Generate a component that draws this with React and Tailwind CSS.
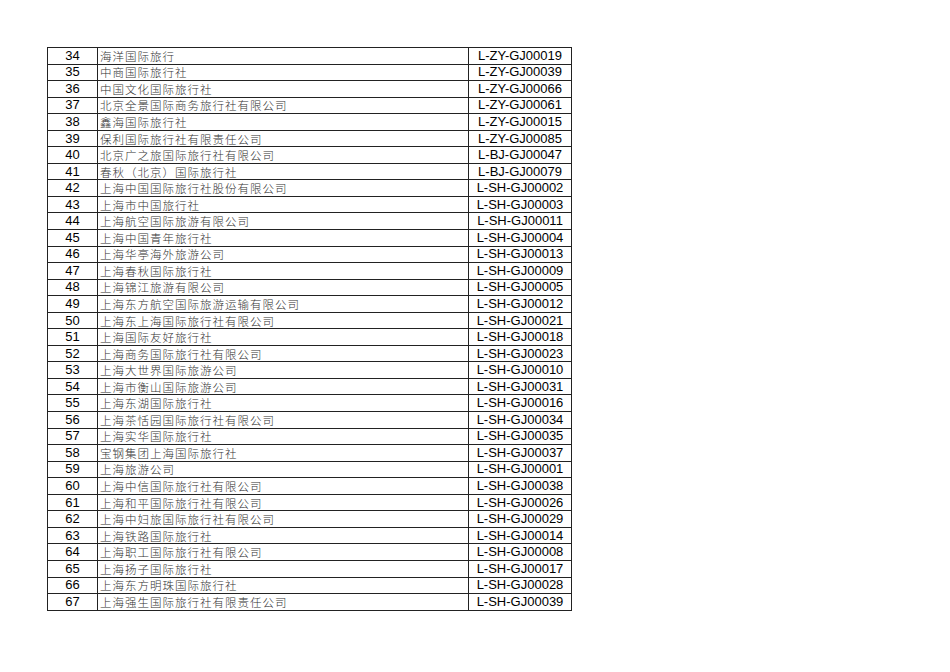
import React from "react";

const rows = [
  [34, "海洋国际旅行", "L-ZY-GJ00019"],
  [35, "中商国际旅行社", "L-ZY-GJ00039"],
  [36, "中国文化国际旅行社", "L-ZY-GJ00066"],
  [37, "北京全景国际商务旅行社有限公司", "L-ZY-GJ00061"],
  [38, "鑫海国际旅行社", "L-ZY-GJ00015"],
  [39, "保利国际旅行社有限责任公司", "L-ZY-GJ00085"],
  [40, "北京广之旅国际旅行社有限公司", "L-BJ-GJ00047"],
  [41, "春秋（北京）国际旅行社", "L-BJ-GJ00079"],
  [42, "上海中国国际旅行社股份有限公司", "L-SH-GJ00002"],
  [43, "上海市中国旅行社", "L-SH-GJ00003"],
  [44, "上海航空国际旅游有限公司", "L-SH-GJ00011"],
  [45, "上海中国青年旅行社", "L-SH-GJ00004"],
  [46, "上海华亭海外旅游公司", "L-SH-GJ00013"],
  [47, "上海春秋国际旅行社", "L-SH-GJ00009"],
  [48, "上海锦江旅游有限公司", "L-SH-GJ00005"],
  [49, "上海东方航空国际旅游运输有限公司", "L-SH-GJ00012"],
  [50, "上海东上海国际旅行社有限公司", "L-SH-GJ00021"],
  [51, "上海国际友好旅行社", "L-SH-GJ00018"],
  [52, "上海商务国际旅行社有限公司", "L-SH-GJ00023"],
  [53, "上海大世界国际旅游公司", "L-SH-GJ00010"],
  [54, "上海市衡山国际旅游公司", "L-SH-GJ00031"],
  [55, "上海东湖国际旅行社", "L-SH-GJ00016"],
  [56, "上海茶恬园国际旅行社有限公司", "L-SH-GJ00034"],
  [57, "上海实华国际旅行社", "L-SH-GJ00035"],
  [58, "宝钢集团上海国际旅行社", "L-SH-GJ00037"],
  [59, "上海旅游公司", "L-SH-GJ00001"],
  [60, "上海中信国际旅行社有限公司", "L-SH-GJ00038"],
  [61, "上海和平国际旅行社有限公司", "L-SH-GJ00026"],
  [62, "上海中妇旅国际旅行社有限公司", "L-SH-GJ00029"],
  [63, "上海铁路国际旅行社", "L-SH-GJ00014"],
  [64, "上海职工国际旅行社有限公司", "L-SH-GJ00008"],
  [65, "上海扬子国际旅行社", "L-SH-GJ00017"],
  [66, "上海东方明珠国际旅行社", "L-SH-GJ00028"],
  [67, "上海强生国际旅行社有限责任公司", "L-SH-GJ00039"],
];

const App = () => {
  return (
    <div className="w-[950px] h-[672px] bg-white pt-[47px] pl-[47px]">
      <table className="border-collapse w-[524px] table-fixed">
        <colgroup>
          <col className="w-[50px]" />
          <col className="w-[371px]" />
          <col className="w-[103px]" />
        </colgroup>
        <tbody>
          {rows.map(([num, name, code]) => (
            <tr key={num} className="h-[16.55px]">
              <td className="border border-[#222] p-0 text-center text-[13px] leading-[14px] text-black font-['Liberation_Sans',Arial,sans-serif]">
                {num}
              </td>
              <td className="border border-[#222] p-0 pl-[2px] text-[11.5px] leading-[14px] text-[#333] whitespace-nowrap font-['Noto_Sans_CJK_SC',sans-serif] font-light tracking-[1px]">
                {name}
              </td>
              <td className="border border-[#222] p-0 text-center text-[13px] leading-[14px] text-black font-['Liberation_Sans',Arial,sans-serif]">
                {code}
              </td>
            </tr>
          ))}
        </tbody>
      </table>
    </div>
  );
};

export default App;
